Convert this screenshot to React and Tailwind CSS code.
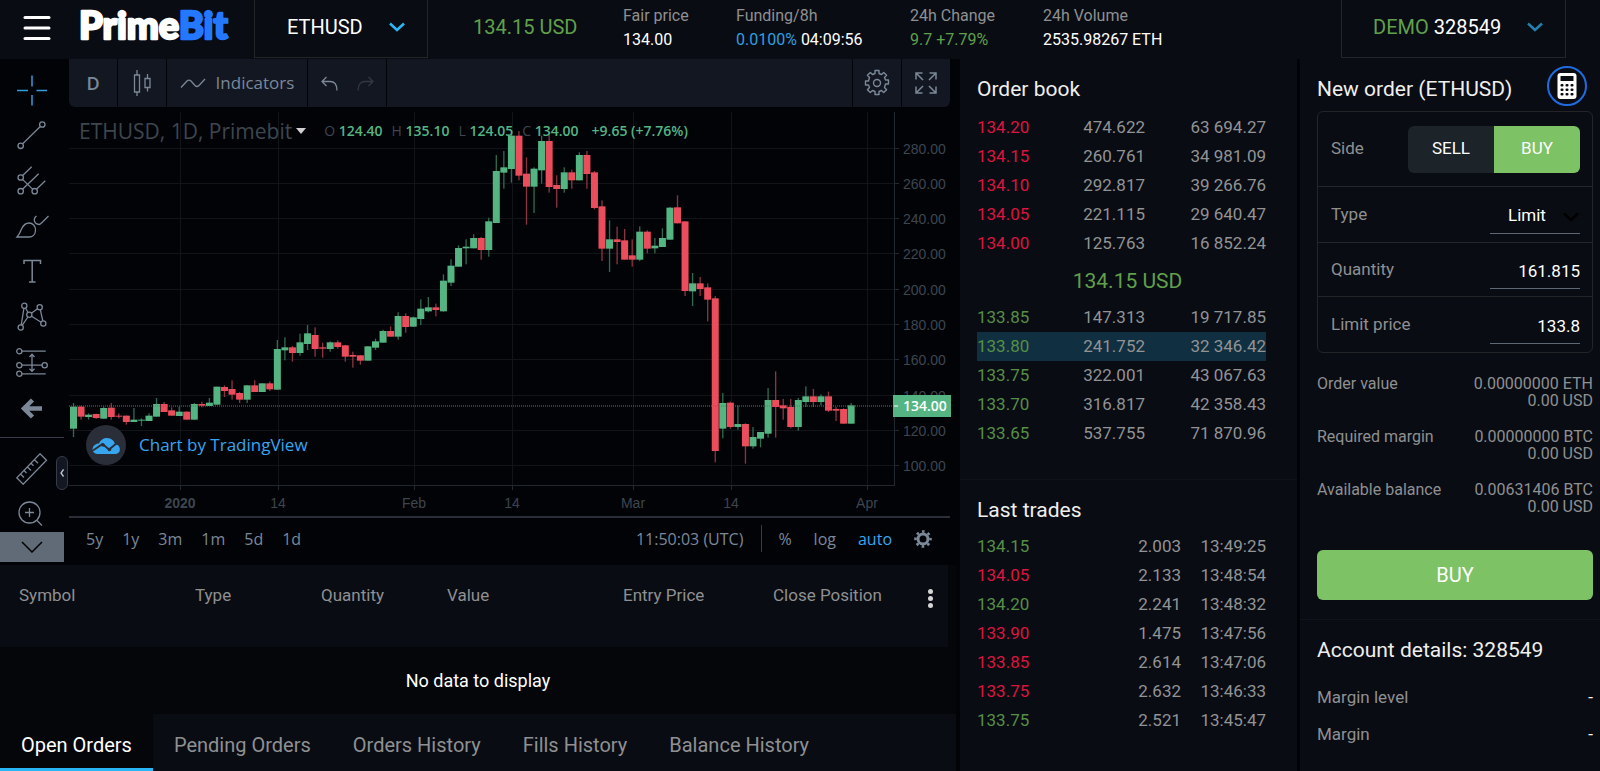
import React, { useState } from 'react';
import { Menu } from 'lucide-react';

// [high, bodyTop, bodyBottom, low, rising]
const candles = [
    [909, 920, 986, 1011, 1], [917, 920, 950, 959, 0], [940, 944, 951, 959, 1], [941, 942, 954, 957, 0],
    [920, 924, 956, 956, 1], [909, 923, 951, 959, 0], [940, 947, 950, 955, 0], [946, 947, 966, 974, 0],
    [924, 959, 966, 966, 1], [955, 959, 962, 978, 1], [940, 947, 963, 963, 1], [894, 912, 950, 950, 1],
    [906, 912, 936, 936, 0], [922, 931, 947, 947, 0], [920, 935, 948, 948, 1], [934, 935, 959, 959, 0],
    [909, 912, 959, 959, 1], [905, 912, 917, 922, 0], [894, 908, 918, 918, 1], [860, 860, 914, 914, 1],
    [856, 861, 873, 891, 0], [841, 867, 884, 899, 0], [876, 879, 899, 909, 0], [856, 856, 899, 909, 1],
    [841, 856, 876, 876, 0], [850, 850, 876, 876, 1], [845, 850, 868, 873, 0], [720, 747, 869, 869, 1],
    [712, 742, 751, 781, 1], [738, 742, 759, 785, 0], [701, 727, 759, 767, 1], [675, 700, 732, 750, 1],
    [682, 705, 747, 770, 0], [728, 742, 746, 773, 0], [724, 727, 747, 755, 1], [721, 727, 741, 746, 0],
    [735, 736, 770, 785, 0], [755, 765, 770, 803, 0], [765, 766, 782, 794, 0], [738, 739, 782, 782, 1],
    [716, 724, 743, 750, 1], [689, 693, 728, 728, 1], [679, 693, 710, 710, 0], [637, 648, 710, 719, 1],
    [640, 648, 681, 698, 0], [650, 652, 680, 680, 1], [598, 626, 657, 675, 1], [591, 622, 634, 637, 1],
    [611, 622, 630, 649, 0], [523, 542, 634, 635, 1], [478, 497, 548, 558, 1], [436, 444, 500, 500, 1],
    [418, 440, 445, 493, 1], [403, 414, 445, 445, 1], [411, 414, 450, 479, 0], [353, 364, 450, 470, 1],
    [165, 213, 369, 369, 1], [153, 202, 218, 266, 1], [100, 107, 207, 248, 1], [93, 107, 227, 241, 0],
    [172, 221, 260, 374, 0], [202, 206, 260, 339, 1], [107, 123, 211, 251, 1], [105, 123, 261, 278, 0],
    [226, 255, 267, 323, 0], [202, 217, 267, 278, 1], [209, 217, 241, 266, 0], [157, 165, 241, 241, 1],
    [153, 165, 222, 266, 0], [213, 217, 324, 328, 0], [301, 319, 446, 483, 0], [361, 418, 446, 516, 1],
    [380, 418, 426, 493, 0], [387, 421, 479, 479, 0], [418, 466, 479, 500, 0], [379, 395, 479, 483, 1],
    [391, 395, 446, 460, 0], [414, 437, 445, 460, 1], [385, 414, 441, 441, 1], [321, 323, 419, 419, 1],
    [286, 322, 370, 370, 0], [364, 364, 573, 588, 0], [519, 550, 574, 618, 1], [531, 550, 567, 588, 0],
    [550, 562, 599, 664, 0], [588, 595, 1053, 1087, 0], [879, 909, 986, 1015, 1], [905, 908, 981, 986, 0],
    [916, 972, 981, 989, 1], [970, 972, 1039, 1091, 0], [981, 1011, 1039, 1046, 1], [996, 996, 1016, 1042, 1],
    [864, 900, 1001, 1013, 1], [814, 900, 921, 1013, 0], [897, 916, 925, 959, 0], [897, 921, 981, 985, 0],
    [894, 900, 981, 992, 1], [859, 889, 906, 921, 1], [867, 889, 906, 921, 0], [883, 889, 906, 916, 1],
    [875, 889, 932, 936, 0], [921, 927, 932, 963, 0], [925, 927, 971, 971, 0], [909, 916, 971, 971, 1],
];

const priceLabels = ['280.00', '260.00', '240.00', '220.00', '200.00', '180.00', '160.00', '140.00', '120.00', '100.00'];

const timeLabels = [
    { x: 111, label: '2020', bold: true },
    { x: 209, label: '14' },
    { x: 345, label: 'Feb' },
    { x: 443, label: '14' },
    { x: 564, label: 'Mar' },
    { x: 662, label: '14' },
    { x: 798, label: 'Apr' },
];

const asks = [
    ['134.20', '474.622', '63 694.27'],
    ['134.15', '260.761', '34 981.09'],
    ['134.10', '292.817', '39 266.76'],
    ['134.05', '221.115', '29 640.47'],
    ['134.00', '125.763', '16 852.24'],
];

const bids = [
    ['133.85', '147.313', '19 717.85'],
    ['133.80', '241.752', '32 346.42'],
    ['133.75', '322.001', '43 067.63'],
    ['133.70', '316.817', '42 358.43'],
    ['133.65', '537.755', '71 870.96'],
];

const trades = [
    ['134.15', '2.003', '13:49:25', true],
    ['134.05', '2.133', '13:48:54', false],
    ['134.20', '2.241', '13:48:32', true],
    ['133.90', '1.475', '13:47:56', false],
    ['133.85', '2.614', '13:47:06', false],
    ['133.75', '2.632', '13:46:33', false],
    ['133.75', '2.521', '13:45:47', true],
];

const tools = [
    {
        name: 'Crosshair',
        active: true,
        icon: <path d="M1 16.5h11M20.5 16.5H31M16 1.5v11M16 21v10.5" strokeWidth="1.5" />,
    },
    {
        name: 'Trend line',
        icon: <><circle cx="4.7" cy="26.8" r="2.7" /><circle cx="26.3" cy="5.5" r="2.7" /><path d="M6.7 24.8 24.3 7.5" /></>,
    },
    {
        name: 'Pitchfork',
        icon: (
            <>
                <circle cx="4.7" cy="13.5" r="2.7" /><circle cx="4.7" cy="27.2" r="2.7" /><circle cx="18.7" cy="27.2" r="2.7" />
                <path d="m6.7 11.5 9-8.7M6.5 25.2 22.7 9.8M20.5 25.2l8.8-8.4M6.5 15.4l10.3 10" />
            </>
        ),
    },
    {
        name: 'Brush',
        icon: <path d="M1 28h12c4 0 6.5-3 6.5-7s-2.7-7-6.5-7c-4 0-6 2.8-7.5 6C4.3 23 3 26 1 28ZM20.5 7c-4 3-2 8.5 2.5 8.5 1 0 1.5-.5 2.5-1.5L32.5 7" />,
    },
    { name: 'Text', icon: <path d="M8 10V6.5h16.5V10M16.2 6.5V28M13 28h6.5" strokeWidth="1.5" /> },
    {
        name: 'Patterns',
        icon: (
            <>
                <circle cx="8.3" cy="6.8" r="2.6" /><circle cx="23.7" cy="8.2" r="2.6" /><circle cx="13.3" cy="15.8" r="2.6" />
                <circle cx="4.7" cy="28.5" r="2.6" /><circle cx="27.3" cy="24.5" r="2.6" />
                <path d="M5.2 26 7.9 9.4M9.6 9l2.4 4.5M15.3 14.2l6.3-4.5M24.3 10.7l2.5 11.2M15.6 17.2l9.5 6M6.2 26.3l5.7-8.3" />
            </>
        ),
    },
    {
        name: 'Forecast',
        icon: (
            <>
                <circle cx="3.3" cy="7.2" r="2.6" /><circle cx="3.3" cy="21.2" r="2.6" />
                <circle cx="28.7" cy="21.2" r="2.6" /><circle cx="3.3" cy="29.8" r="2.6" />
                <path d="M6 7.2h23.7M6 21.2h20M6 29.8h23.7M16 11v15.5M13.5 13 16 10.3l2.5 2.7M13.5 24.7l2.5 2.7 2.5-2.7" />
            </>
        ),
    },
    { name: 'Back', icon: <path d="m16.5 11-8.5 8.5 8.5 8.5M8 19.5h18" strokeWidth="4.5" /> },
];

const Chevron = ({ className }) => (
    <svg className={className} viewBox="0 0 16 10" fill="none" stroke="currentColor" strokeWidth="2.5">
        <path d="m1 1.5 7 6.5 7-6.5" />
    </svg>
);

const CalculatorIcon = () => (
    <svg className="h-[26px] w-5" viewBox="0 0 20 26">
        <rect x="0.5" width="19" height="26" rx="3" fill="#fff" />
        <rect x="3.5" y="3" width="13" height="5" rx="0.5" fill="#090c13" />
        {[11, 15.5, 20].map((y) =>
            [3.5, 8.5, 13.5].map((x) => <rect key={`${x}-${y}`} x={x} y={y} width="3" height="2.6" rx="1" fill="#090c13" />)
        )}
    </svg>
);

const Stat = ({ label, children, className = '' }) => (
    <div className={`whitespace-nowrap text-base leading-6 ${className}`}>
        <div className="text-[#8f9091]">{label}</div>
        <div className="text-white">{children}</div>
    </div>
);

const Header = () => (
    <header className="flex h-[59px] items-start bg-[#090c13]">
        <button aria-label="Menu" className="ml-[19px] mt-[10px] text-white">
            <Menu className="h-9 w-9" strokeWidth={2} />
        </button>
        <svg className="ml-[22px] h-14 w-[160px]" viewBox="0 0 160 56" role="img" aria-label="PrimeBit">
            <text x="2" y="39" fontFamily="Lato" fontWeight="900" fontSize="38" strokeWidth="2.4" strokeLinejoin="round">
                <tspan fill="#fff" stroke="#fff">Prime</tspan>
                <tspan fill="#2478ff" stroke="#2478ff">Bit</tspan>
            </text>
        </svg>
        <button className="ml-[17px] flex h-[58px] w-[174px] items-center justify-between border border-t-0 border-[#232529] pb-1 pl-8 pr-[22px] text-xl text-white">
            ETHUSD
            <Chevron className="h-[10px] w-4 text-[#2cb5f8]" />
        </button>
        <div className="ml-[45px] w-[150px] text-xl leading-[54px] text-[#61a04b]">134.15 USD</div>
        <div className="flex pt-1">
            <Stat label="Fair price" className="w-[113px]">134.00</Stat>
            <Stat label="Funding/8h" className="w-[174px]"><span className="text-[#2f9fe0]">0.0100%</span> 04:09:56</Stat>
            <Stat label="24h Change" className="w-[133px]"><span className="text-[#61a04b]">9.7 +7.79%</span></Stat>
            <Stat label="24h Volume">2535.98267 ETH</Stat>
        </div>
        <button className="ml-auto mr-[34px] flex h-[58px] w-[225px] items-center justify-between border border-t-0 border-[#232529] pb-1 pl-[31px] pr-[22px] text-xl text-white">
            <span><span className="text-[#61a04b]">DEMO</span> 328549</span>
            <Chevron className="h-[10px] w-4 text-[#237fae]" />
        </button>
    </header>
);

const DrawingTools = () => (
    <div className="relative flex w-16 shrink-0 flex-col pt-2 text-[#7b8898]">
        {tools.map((tool) => (
            <button
                key={tool.name}
                aria-label={tool.name}
                className={`flex h-[45px] items-center justify-center ${tool.active ? 'text-[#2f9fe0]' : ''}`}
            >
                <svg className="h-8 w-8 overflow-visible" viewBox="0 0 32 32" fill="none" stroke="currentColor" strokeWidth="1.3">{tool.icon}</svg>
            </button>
        ))}
        <div className="mb-2 mt-[10px] h-px bg-[#363c48]" />
        <button aria-label="Measure" className="flex h-[45px] items-center justify-center">
            <svg className="h-8 w-8" viewBox="0 0 32 32" fill="none" stroke="currentColor" strokeWidth="1.3">
                <path d="M24 .8 30.5 7.2 7.2 31.2.8 24.8ZM4.5 21l3.5 3.5M8 17.5l2.5 2.5M11.5 14l3.5 3.5M15 10.3l2.5 2.5M18.5 6.7l3.5 3.5" />
            </svg>
        </button>
        <button aria-label="Zoom in" className="flex h-[41px] items-center justify-center">
            <svg className="h-8 w-8" viewBox="0 0 32 32" fill="none" stroke="currentColor" strokeWidth="1.3">
                <circle cx="13.5" cy="16.5" r="10.5" />
                <path d="m21 24.5 5 5M9 16.5h9M13.5 12v9" />
            </svg>
        </button>
        <button aria-label="Scroll down" className="flex h-[30px] items-center justify-center bg-[#606b77] text-black">
            <svg className="h-3 w-[22px]" viewBox="0 0 22 12" fill="none" stroke="currentColor" strokeWidth="1.5">
                <path d="m1 1 10 10L21 1" />
            </svg>
        </button>
        <button aria-label="Hide toolbar" className="absolute -right-1 bottom-[73px] flex h-[34px] w-3 items-center justify-center rounded-md border border-[#363c48] bg-[#131722] text-[#c3c8cf]">
            <svg className="h-2 w-1" viewBox="0 0 4 8" fill="none" stroke="currentColor" strokeWidth="1.3">
                <path d="M3.5.5 1 4l2.5 3.5" />
            </svg>
        </button>
    </div>
);

const ChartToolbar = () => (
    <div className="flex h-12 gap-px text-[#7b8898]">
        <button className="w-12 rounded-bl-md bg-[#131722] font-['Open_Sans'] text-lg font-semibold">D</button>
        <button aria-label="Candles" className="flex w-12 items-center justify-center bg-[#131722]">
            <svg className="h-[26px] w-[18px]" viewBox="0 0 18 26" fill="none" stroke="currentColor" strokeWidth="1.3">
                <path d="M1.5 5h5v17h-5ZM4 0v5M4 22v4M12 8.5h5v9h-5ZM14.5 4v4.5M14.5 17.5v4" />
            </svg>
        </button>
        <button className="flex w-[140px] items-center justify-center gap-[10px] bg-[#131722] font-['Open_Sans'] text-[17px]">
            <svg className="h-[10px] w-[26px]" viewBox="0 0 26 10" fill="none" stroke="currentColor" strokeWidth="1.3">
                <path d="M1 9.5 7 3c1.3-1.3 2.5-1.3 4 0l4 4.5c1.5 1.5 2.5 1.5 4 0L25 1" />
            </svg>
            Indicators
        </button>
        <div className="flex w-[78px] items-center justify-center gap-[19px] bg-[#131722]">
            <button aria-label="Undo">
                <svg className="h-[15px] w-[17px]" viewBox="0 0 17 15" fill="none" stroke="currentColor" strokeWidth="1.3">
                    <path d="M5.5 1 1 5.5 5.5 10M1 5.5h8c4 0 7 3 7 9" />
                </svg>
            </button>
            <button aria-label="Redo" className="text-[#313844]">
                <svg className="h-[15px] w-[17px]" viewBox="0 0 17 15" fill="none" stroke="currentColor" strokeWidth="1.3">
                    <path d="M11.5 1 16 5.5 11.5 10M16 5.5H8c-4 0-7 3-7 9" />
                </svg>
            </button>
        </div>
        <div className="flex-1 bg-[#131722]" />
        <button aria-label="Chart settings" className="flex w-12 items-center justify-center bg-[#131722]">
            <svg className="h-[28px] w-[28px]" viewBox="0 0 28 28" fill="none" stroke="currentColor" strokeWidth="1.4" strokeLinejoin="round">
                <circle cx="14" cy="14" r="3.5" />
                <path d="M12 1.5h4v3l2.5 1 2.2-2.1 2.9 2.9-2.1 2.2 1 2.5h3v4h-3l-1 3.5 2.1 2.2-2.9 2.9-2.2-2.1-2.5 1v3h-4v-3l-2.5-1-2.2 2.1-2.9-2.9 2.1-2.2-1-2.5h-3v-4h3l1-3.5-2.1-2.2 2.9-2.9 2.2 2.1 2.5-1Z" />
            </svg>
        </button>
        <button aria-label="Fullscreen" className="flex w-12 items-center justify-center rounded-br-md bg-[#131722]">
            <svg className="h-[22px] w-[22px]" viewBox="0 0 22 22" fill="none" stroke="currentColor" strokeWidth="1.5">
                <path d="M1 7.5V1h6.5M1 1l7 7M14.5 1H21v6.5M21 1l-7 7M1 14.5V21h6.5M1 21l7-7M21 14.5V21h-6.5M21 21l-7-7" />
            </svg>
        </button>
    </div>
);

const Legend = () => (
    <div className="absolute left-[10px] top-[5px] flex items-center font-['Open_Sans'] text-[#3d464f]">
        <span className="text-[21px] leading-7">ETHUSD, 1D, Primebit</span>
        <span className="ml-1 mr-[18px] border-x-[5px] border-t-[6px] border-x-transparent border-t-[#d0d0d0]" />
        <div className="flex gap-[9px] text-sm">
            <span>O <b className="font-semibold text-[#54b583]">124.40</b></span>
            <span>H <b className="font-semibold text-[#54b583]">135.10</b></span>
            <span>L <b className="font-semibold text-[#54b583]">124.05</b></span>
            <span>C <b className="font-semibold text-[#54b583]">134.00</b></span>
            <b className="ml-1 font-semibold text-[#54b583]">+9.65 (+7.76%)</b>
        </div>
    </div>
);

const CandleChart = () => (
    <div className="relative mt-[5px] border-b-2 border-[#2a2e39]">
        <svg className="block w-full overflow-visible" viewBox="0 0 881 404" role="img" aria-label="ETHUSD daily candles">
            <g stroke="#111419" shapeRendering="crispEdges">
                {priceLabels.map((price, i) => (
                    <line key={price} x1="0" x2="825" y1={36 + i * 35.33} y2={36 + i * 35.33} />
                ))}
                {timeLabels.map((t) => <line key={t.x} x1={t.x + 0.5} x2={t.x + 0.5} y1="0" y2="373" />)}
            </g>
            <g stroke="#222830" shapeRendering="crispEdges">
                <path d="M0 373.5h825.5V0" fill="none" />
                {priceLabels.map((price, i) => <line key={price} x1="825" x2="830" y1={36 + i * 35.33} y2={36 + i * 35.33} />)}
                {timeLabels.map((t) => <line key={t.x} x1={t.x + 0.5} x2={t.x + 0.5} y1="373" y2="378" />)}
            </g>
            <g fill="#3d464f" fontFamily="Liberation Sans" fontSize="14">
                {priceLabels.map((price, i) => <text key={price} x="834" y={41.5 + i * 35.33}>{price}</text>)}
                {timeLabels.map((t) => (
                    <text key={t.x} x={t.x} y="396" textAnchor="middle" fontWeight={t.bold ? 700 : 400}>{t.label}</text>
                ))}
            </g>
            <g transform={`translate(-9 -12) scale(${1 / 3})`}>
                {candles.map(([high, top, bottom, low, rising], i) => {
                    const x = 40.5 + i * 22.65;
                    return (
                        <g key={i}>
                            <rect x={x - 2} y={high} width="4" height={low - high} fill={rising ? '#2f6b4e' : '#8a3440'} />
                            <rect x={x - 10.5} y={top} width="21" height={bottom - top} fill={rising ? '#54b583' : '#eb4d5c'} />
                        </g>
                    );
                })}
            </g>
            <line x1="0" x2="825" y1="294" y2="294" stroke="#3f8a62" strokeDasharray="1 1" />
            <rect x="824" y="283" width="58" height="22" fill="#54b583" />
            <path d="M825 294h4" stroke="#fff" />
            <text x="834" y="299" fill="#fff" fontFamily="Open Sans" fontWeight="600" fontSize="14">134.00</text>
        </svg>
        <Legend />
        <a href="#tradingview" className="absolute bottom-[51px] left-[17px] flex items-center gap-[13px] font-['Open_Sans'] text-[17px] font-medium text-[#37a6ef]">
            <span className="flex h-10 w-10 items-center justify-center rounded-full bg-[#2a2e39]">
                <svg className="h-[17px] w-[29px]" viewBox="0 0 29 17">
                    <path d="M5 17a5 5 0 0 1-1.5-9.5 5 5 0 0 1 3.5-1A8.5 8.5 0 0 1 21.5 4a6.5 6.5 0 0 1 1.5 3.5A4.8 4.8 0 0 1 24 17Z" fill="currentColor" />
                    <path d="M1 13.5 10.5 7l6.5 5.5L25 6" fill="none" stroke="#2a2e39" strokeWidth="1.8" />
                    <circle cx="11" cy="8" r="1.8" fill="#2a2e39" /><circle cx="17.5" cy="12.5" r="1.8" fill="#2a2e39" />
                </svg>
            </span>
            Chart by TradingView
        </a>
    </div>
);

const ChartFooter = () => (
    <div className="flex h-[45px] items-center pb-1 pl-[17px] pr-[18px] font-['Open_Sans'] text-base text-[#7b8898]">
        <div className="flex gap-[19px]">
            {['5y', '1y', '3m', '1m', '5d', '1d'].map((range) => <button key={range}>{range}</button>)}
        </div>
        <span className="ml-auto">11:50:03 (UTC)</span>
        <span className="ml-[18px] mr-4 h-[27px] w-px bg-[#363c48]" />
        <div className="flex items-center gap-[22px]">
            <button>%</button>
            <button>log</button>
            <button className="text-[#37a6ef]">auto</button>
            <button aria-label="Scale settings">
                <svg className="h-[18px] w-[18px]" viewBox="0 0 18 18" fill="none" stroke="currentColor">
                    <circle cx="9" cy="9" r="5" strokeWidth="3" />
                    <circle cx="9" cy="9" r="7.5" strokeWidth="2.6" strokeDasharray="2.6 3.29" strokeDashoffset="1.3" />
                </svg>
            </button>
        </div>
    </div>
);

const orderTabs = ['Open Orders', 'Pending Orders', 'Orders History', 'Fills History', 'Balance History'];

const OrdersPanel = () => {
    const [tab, setTab] = useState('Open Orders');

    return (
        <section className="flex flex-1 flex-col bg-[#04060a]">
            <div className="flex-1 pr-2">
                <table className="w-full table-fixed text-left text-[17px]">
                    <thead>
                        <tr className="h-[82px] bg-[#090c13] align-top text-[#8f9091]">
                            <th className="w-[176px] pl-[19px] pt-[18px] font-normal">Symbol</th>
                            <th className="w-[126px] pl-[19px] pt-[18px] font-normal">Type</th>
                            <th className="w-[126px] pl-[19px] pt-[18px] font-normal">Quantity</th>
                            <th className="w-[176px] pl-[19px] pt-[18px] font-normal">Value</th>
                            <th className="w-[150px] pl-[19px] pt-[18px] font-normal">Entry Price</th>
                            <th className="pl-[19px] pt-[18px] font-normal">Close Position</th>
                            <th className="w-9 pt-6">
                                <button aria-label="Columns" className="flex w-9 flex-col items-center gap-[2px]">
                                    <span className="h-[5px] w-[5px] rounded-full bg-[#d5d5d5]" />
                                    <span className="h-[5px] w-[5px] rounded-full bg-[#d5d5d5]" />
                                    <span className="h-[5px] w-[5px] rounded-full bg-[#d5d5d5]" />
                                </button>
                            </th>
                        </tr>
                    </thead>
                    <tbody>
                        <tr>
                            <td colSpan={7} className="h-[67px] pl-2 text-center text-lg text-white">No data to display</td>
                        </tr>
                    </tbody>
                </table>
            </div>
            <div className="flex h-[57px] bg-[#090c13] text-xl">
                {orderTabs.map((name) => (
                    <button
                        key={name}
                        onClick={() => setTab(name)}
                        className={`border-b-[3px] px-[21px] pt-2 ${tab === name ? 'border-[#29b6f6] bg-[#04060a] text-white' : 'border-transparent text-[#8f9091]'}`}
                    >
                        {name}
                    </button>
                ))}
            </div>
        </section>
    );
};

const BookTable = ({ rows, priceClass, selected }) => (
    <table className="w-full table-fixed text-[17px] text-[#929394]">
        <tbody>
            {rows.map(([price, amount, total]) => (
                <tr key={price} className={`h-[29px] ${price === selected ? 'bg-[#102f40]' : ''}`}>
                    <td className={priceClass}>{price}</td>
                    <td className="w-[81px] text-right">{amount}</td>
                    <td className="w-[121px] text-right">{total}</td>
                </tr>
            ))}
        </tbody>
    </table>
);

const MarketColumn = () => (
    <div className="mr-[3px] flex w-[337px] shrink-0 flex-col bg-[#090c13]">
        <section className="border-b border-[#0f131b] pb-[31px] pl-[17px] pr-[31px] pt-4">
            <h2 className="mb-[10px] text-[21px] leading-7 text-[#f0efec]">Order book</h2>
            <BookTable rows={asks} priceClass="text-[#dc143f]" />
            <div className="pb-2 pl-3 pt-[9px] text-center text-[21px] leading-7 text-[#61a04b]">134.15 USD</div>
            <BookTable rows={bids} priceClass="text-[#568f45]" selected="133.80" />
        </section>
        <section className="pl-[17px] pr-[31px] pt-4">
            <h2 className="mb-2 text-[21px] leading-7 text-[#f0efec]">Last trades</h2>
            <table className="w-full table-fixed text-[17px] text-[#929394]">
                <tbody>
                    {trades.map(([price, amount, time, up]) => (
                        <tr key={time} className="h-[29px]">
                            <td className={up ? 'text-[#568f45]' : 'text-[#dc143f]'}>{price}</td>
                            <td className="text-right">{amount}</td>
                            <td className="w-[85px] text-right">{time}</td>
                        </tr>
                    ))}
                </tbody>
            </table>
        </section>
    </div>
);

const SummaryRow = ({ label, value }) => (
    <div className="mb-[19px] flex justify-between text-base leading-[17px]">
        <span>{label}</span>
        <span className="text-right">
            <span className="block">{value}</span>
            <span className="block">0.00 USD</span>
        </span>
    </div>
);

const OrderColumn = () => {
    const [side, setSide] = useState('BUY');
    const [quantity, setQuantity] = useState('161.815');
    const [price, setPrice] = useState('133.8');

    return (
        <div className="w-[300px] shrink-0 bg-[#090c13] text-[#8f9091]">
            <section className="border-b border-[#0f131b] pb-[19px] pl-[17px] pr-[7px] pt-[7px]">
                <div className="mb-[5px] flex items-center justify-between pr-[6px]">
                    <h2 className="pt-[5px] text-[21px] leading-7 text-[#f0efec]">New order (ETHUSD)</h2>
                    <button aria-label="Calculator" className="flex h-10 w-10 items-center justify-center rounded-full border-2 border-[#1f6ce0]">
                        <CalculatorIcon />
                    </button>
                </div>
                <div className="divide-y divide-[#232529] rounded-md border border-[#232529] text-[17px]">
                    <div className="flex h-[75px] items-center justify-between pl-[13px] pr-3">
                        <span>Side</span>
                        <div className="flex h-[47px] overflow-hidden rounded-md">
                            {['SELL', 'BUY'].map((name) => (
                                <button
                                    key={name}
                                    onClick={() => setSide(name)}
                                    className={`w-[86px] text-white ${side === name ? 'bg-[#7dc264]' : 'bg-[#1c2329]'}`}
                                >
                                    {name}
                                </button>
                            ))}
                        </div>
                    </div>
                    <div className="flex h-[56px] items-center justify-between pl-[13px] pr-3">
                        <label htmlFor="type">Type</label>
                        <div className="relative mt-[3px] w-[90px]">
                            <select id="type" className="h-9 w-full appearance-none border-b border-[#5d6873] bg-transparent pl-[18px] text-white outline-none">
                                <option>Limit</option>
                            </select>
                            <Chevron className="pointer-events-none absolute right-0 top-[14px] h-[10px] w-[18px] text-black" />
                        </div>
                    </div>
                    <div className="flex h-[54px] items-center justify-between pl-[13px] pr-3">
                        <label htmlFor="quantity">Quantity</label>
                        <input
                            id="quantity"
                            className="mt-[3px] h-9 w-[90px] border-b border-[#5d6873] bg-transparent text-right text-white outline-none"
                            value={quantity}
                            onChange={(e) => setQuantity(e.target.value)}
                        />
                    </div>
                    <div className="flex h-[55px] items-center justify-between pl-[13px] pr-3">
                        <label htmlFor="price">Limit price</label>
                        <input
                            id="price"
                            className="mt-[3px] h-9 w-[90px] border-b border-[#5d6873] bg-transparent text-right text-white outline-none"
                            value={price}
                            onChange={(e) => setPrice(e.target.value)}
                        />
                    </div>
                </div>
                <div className="pt-[22px] text-base">
                    <SummaryRow label="Order value" value="0.00000000 ETH" />
                    <SummaryRow label="Required margin" value="0.00000000 BTC" />
                    <SummaryRow label="Available balance" value="0.00631406 BTC" />
                </div>
                <button className="mt-4 h-[50px] w-full rounded-md bg-[#7dc264] text-xl text-white">BUY</button>
            </section>
            <section className="pl-[17px] pr-[7px] pt-4 text-[17px]">
                <h2 className="mb-[15px] text-[21px] leading-7 text-[#f0efec]">Account details: 328549</h2>
                <div className="flex h-[37px] items-center justify-between">Margin level <span className="text-white">-</span></div>
                <div className="flex h-[37px] items-center justify-between">Margin <span className="text-white">-</span></div>
            </section>
        </div>
    );
};

const App = () => {
    return (
        <div className="flex min-h-screen flex-col bg-[#020307] font-['Roboto',sans-serif]">
            <Header />
            <main className="flex flex-1">
                <div className="mr-1 flex min-w-0 flex-1 flex-col">
                    <div className="flex gap-[5px] pb-[2px] pr-[6px]">
                        <DrawingTools />
                        <div className="min-w-0 flex-1">
                            <ChartToolbar />
                            <CandleChart />
                            <ChartFooter />
                        </div>
                    </div>
                    <OrdersPanel />
                </div>
                <MarketColumn />
                <OrderColumn />
            </main>
        </div>
    );
};

export default App;
